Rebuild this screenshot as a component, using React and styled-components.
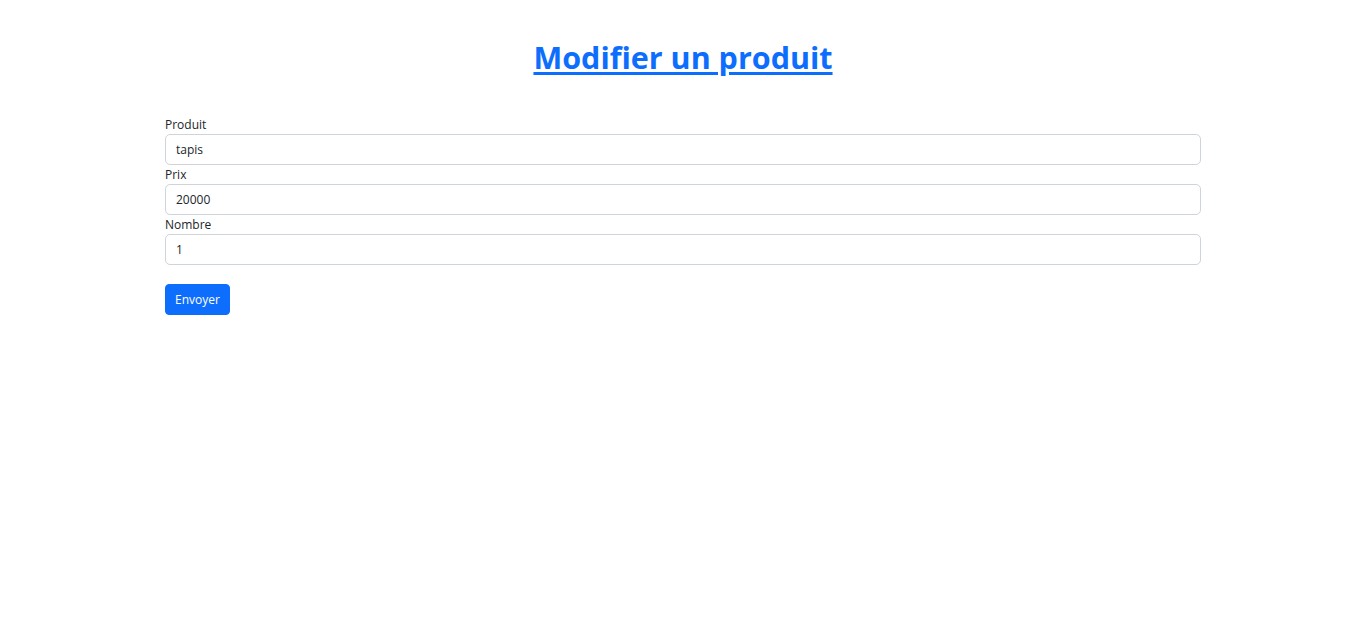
import React from 'react'
import styled, { createGlobalStyle } from 'styled-components'

const GlobalStyle = createGlobalStyle`
    body {
        margin: 0;
        background: #fff;
        font-family: "Open Sans", "Noto Sans", sans-serif;
        color: #212529;
    }
`

const Page = styled.div`
    width: 1036px;
    margin: 0 auto;
    padding-top: 35px;
`

const Title = styled.h1`
    margin: 0 0 36px;
    text-align: center;
    font-size: 30.5px;
    line-height: 44px;
    font-weight: 700;
    color: #0d6efd;
    text-decoration: underline;
    text-underline-offset: 3px;
`

const Form = styled.form`
    display: flex;
    flex-direction: column;
`

const Label = styled.label`
    font-size: 12px;
    line-height: 19px;
    display: block;
`

const Input = styled.input`
    box-sizing: border-box;
    width: 100%;
    height: 31px;
    padding: 0 10px;
    font-family: inherit;
    font-size: 12px;
    color: #212529;
    border: 1px solid #ced4da;
    border-radius: 5px;
    outline: none;
`

const Button = styled.button`
    align-self: flex-start;
    margin-top: 19px;
    height: 31px;
    padding: 0 9px;
    font-family: inherit;
    font-size: 12px;
    color: #fff;
    background: #0d6efd;
    border: 1px solid #0d6efd;
    border-radius: 4px;
    cursor: pointer;
`

const fields = [
    { id: 'produit', label: 'Produit', value: 'tapis' },
    { id: 'prix', label: 'Prix', value: '20000' },
    { id: 'nombre', label: 'Nombre', value: '1' },
]

const App = () => {
    return (
        <>
            <GlobalStyle />
            <Page>
                <Title>Modifier un produit</Title>
                <Form onSubmit={e => e.preventDefault()}>
                    {fields.map(f => (
                        <div key={f.id}>
                            <Label htmlFor={f.id}>{f.label}</Label>
                            <Input id={f.id} defaultValue={f.value} />
                        </div>
                    ))}
                    <Button type="submit">Envoyer</Button>
                </Form>
            </Page>
        </>
    )
}

export default App
